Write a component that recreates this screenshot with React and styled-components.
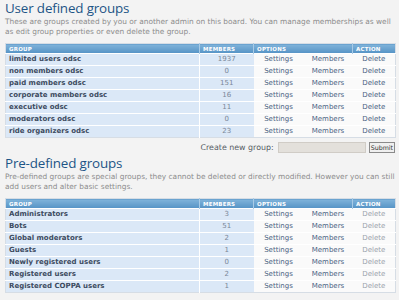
import React from "react";
import styled, { createGlobalStyle } from "styled-components";

const GlobalStyle = createGlobalStyle`
  html, body {
    margin: 0;
    padding: 0;
    background: #f3f3f3;
  }
  body {
    font-family: "DejaVu Sans", Verdana, sans-serif;
  }
`;

const Page = styled.div`
  width: 399px;
  padding: 0 4px 0 5px;
  box-sizing: border-box;
`;

const Title = styled.h1`
  margin: ${(p) => p.$top || 0}px 0 0;
  font-family: "Open Sans", "Liberation Sans", sans-serif;
  font-weight: 400;
  font-size: 13.4px;
  line-height: 17px;
  color: #1d5586;
  letter-spacing: -0.15px;
`;

const Desc = styled.p`
  margin: 0 0 6px;
  font-size: 7.4px;
  line-height: 10px;
  color: #8c8c8c;
`;

const Table = styled.table`
  width: 390px;
  border-collapse: collapse;
  table-layout: fixed;
  border: 1px solid #d6dde5;
  background: #fafafa;
`;

const Th = styled.th`
  height: 9px;
  padding: 0 0 0 3px;
  text-align: left;
  font-size: 5.5px;
  font-weight: 700;
  letter-spacing: 0.2px;
  text-transform: uppercase;
  color: #ffffff;
  background: linear-gradient(#80b3da, #5593c5);
  border-right: 1px solid #a9cbe6;
  &:last-child {
    border-right: none;
  }
`;

const Td = styled.td`
  height: 11px;
  padding: 0;
  font-size: 7px;
  line-height: 11px;
  border-top: 1px solid #ffffff;
  white-space: nowrap;
  overflow: hidden;
`;

const NameCell = styled(Td)`
  padding-left: 3px;
  font-weight: 700;
  color: #3d4b60;
  background: #dbe8f7;
`;

const CountCell = styled(Td)`
  text-align: center;
  color: #7a8798;
  background: #dbe8f7;
  border-left: 1px solid #ffffff;
`;

const LinkCell = styled(Td)`
  text-align: center;
  color: ${(p) => (p.$muted ? "#9aa3ad" : "#4a6283")};
  background: #fafafa;
`;

const CreateRow = styled.form`
  display: flex;
  justify-content: flex-end;
  align-items: center;
  gap: 3px;
  margin: 4px 0 0;
  height: 11px;
`;

const Label = styled.label`
  font-size: 7.9px;
  color: #555b63;
  margin-right: 1px;
`;

const Input = styled.div`
  width: 86px;
  height: 9px;
  background: #e3e0db;
  border: 1px solid #d0ccc6;
`;

const Button = styled.div`
  height: 9px;
  padding: 0 1px;
  font-size: 6.3px;
  line-height: 9px;
  color: #333;
  background: #efefef;
  border: 1px solid #8a8a8a;
`;

const userGroups = [
  ["limited users odsc", 1937],
  ["non members odsc", 0],
  ["paid members odsc", 151],
  ["corporate members odsc", 16],
  ["executive odsc", 11],
  ["moderators odsc", 0],
  ["ride organizers odsc", 23],
];

const predefined = [
  ["Administrators", 3],
  ["Bots", 51],
  ["Global moderators", 2],
  ["Guests", 1],
  ["Newly registered users", 0],
  ["Registered users", 2],
  ["Registered COPPA users", 1],
];

const GroupTable = ({ rows, muted }) => (
  <Table>
    <colgroup>
      <col style={{ width: 194 }} />
      <col style={{ width: 54 }} />
      <col style={{ width: 50 }} />
      <col style={{ width: 49 }} />
      <col style={{ width: 43 }} />
    </colgroup>
    <thead>
      <tr>
        <Th>Group</Th>
        <Th>Members</Th>
        <Th colSpan={2}>Options</Th>
        <Th>Action</Th>
      </tr>
    </thead>
    <tbody>
      {rows.map(([name, count]) => (
        <tr key={name}>
          <NameCell>{name}</NameCell>
          <CountCell>{count}</CountCell>
          <LinkCell>Settings</LinkCell>
          <LinkCell>Members</LinkCell>
          <LinkCell $muted={muted}>Delete</LinkCell>
        </tr>
      ))}
    </tbody>
  </Table>
);

const App = () => {
  return (
    <Page>
      <GlobalStyle />
      <Title>User defined groups</Title>
      <Desc>
        These are groups created by you or another admin on this board. You can
        manage memberships as well as edit group properties or even delete the
        group.
      </Desc>
      <GroupTable rows={userGroups} />
      <CreateRow>
        <Label>Create new group:</Label>
        <Input />
        <Button>Submit</Button>
      </CreateRow>
      <Title $top={2}>Pre-defined groups</Title>
      <Desc>
        Pre-defined groups are special groups, they cannot be deleted or
        directly modified. However you can still add users and alter basic
        settings.
      </Desc>
      <GroupTable rows={predefined} muted />
    </Page>
  );
};

export default App;
